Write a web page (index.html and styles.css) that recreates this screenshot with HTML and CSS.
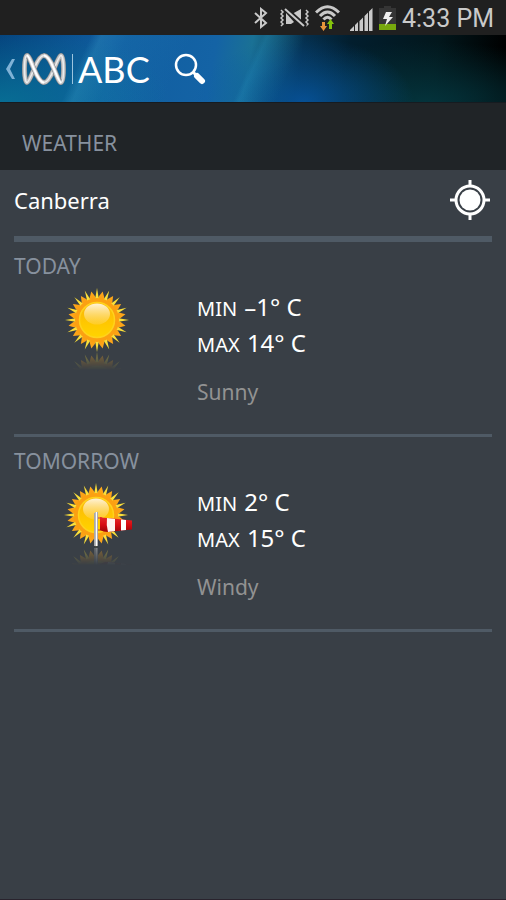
FILE: index.html
```html
<!DOCTYPE html>
<html lang="en">
<head>
<meta charset="utf-8">
<meta name="viewport" content="width=device-width, initial-scale=1">
<title>ABC Weather</title>
<link rel="stylesheet" href="styles.css">
</head>
<body>
<svg class="defs" aria-hidden="true">
  <defs>
    <radialGradient id="rays" cx="0" cy="0" r="30" gradientUnits="userSpaceOnUse"><stop offset=".7" stop-color="#fba012"/><stop offset="1" stop-color="#ffa91e"/></radialGradient>
    <linearGradient id="disc" x1="0" y1="0" x2="0" y2="1"><stop offset="0" stop-color="#f9b40b"/><stop offset=".6" stop-color="#ffc800"/><stop offset="1" stop-color="#ffd400"/></linearGradient>
    <linearGradient id="shine" x1="0" y1="0" x2="0" y2="1"><stop offset="0" stop-color="#fff3d8"/><stop offset="1" stop-color="#ffd24a" stop-opacity=".5"/></linearGradient>
    <linearGradient id="fade" x1="0" y1="14" x2="0" y2="33" gradientUnits="userSpaceOnUse"><stop offset="0" stop-color="#fff" stop-opacity="0"/><stop offset="1" stop-color="#fff" stop-opacity=".4"/></linearGradient>
    <mask id="mirror" maskUnits="userSpaceOnUse" x="-40" y="14" width="80" height="20"><rect x="-40" y="14" width="80" height="20" fill="url(#fade)"/></mask>
    <linearGradient id="pole" x1="0" y1="0" x2="1" y2="0"><stop offset="0" stop-color="#999"/><stop offset=".5" stop-color="#fff"/><stop offset="1" stop-color="#888"/></linearGradient>
    <linearGradient id="sock" x1="0" y1="0" x2="0" y2="1"><stop offset="0" stop-color="#e52a2a"/><stop offset=".5" stop-color="#d80c12"/><stop offset="1" stop-color="#9c0508"/></linearGradient>
    <path id="curve" d="M19.500 0C19.500 7.300 18.600 13.500 17 13.500S13 7.300 10 0S3.500 -13.500 0 -13.500S-7 -7.300 -10 0S-15.600 13.500 -17 13.500S-19.500 7.300 -19.500 0S-18.600 -13.500 -17 -13.500S-13 -7.300 -10 0S-3.500 13.500 0 13.500S7 7.300 10 0S15.600 -13.500 17 -13.500S19.500 -7.300 19.500 0Z"/>
    <path id="over" d="M-17 -13.500C-15.400 -13.500 -13 -7.300 -10 0S-3.500 13.500 0 13.500M0 -13.500C3.500 -13.500 7 -7.300 10 0S15.400 13.500 17 13.500"/>
    <path id="ray" d="M-2 -20L0 -32L2 -20Z"/>
    <g id="ray4"><use href="#ray"/><use href="#ray" transform="rotate(22.5)"/><use href="#ray" transform="rotate(45)"/><use href="#ray" transform="rotate(67.5)"/></g>
    <path id="tooth" d="M-4 -19Q-3 -24 0 -29Q3 -24 4 -19Z"/>
    <g id="tooth4"><use href="#tooth"/><use href="#tooth" transform="rotate(22.5)"/><use href="#tooth" transform="rotate(45)"/><use href="#tooth" transform="rotate(67.5)"/></g>
    <g id="sun">
      <g fill="url(#rays)" transform="rotate(11.25)"><use href="#tooth4"/><use href="#tooth4" transform="rotate(90)"/><use href="#tooth4" transform="rotate(180)"/><use href="#tooth4" transform="rotate(270)"/><circle r="22"/></g>
      <g fill="#fbe03a"><use href="#ray4"/><use href="#ray4" transform="rotate(90)"/><use href="#ray4" transform="rotate(180)"/><use href="#ray4" transform="rotate(270)"/></g>
      <circle r="22" fill="#fba012"/>
      <circle r="17.500" fill="url(#disc)" stroke="#ffd21c" stroke-width="1.500"/>
      <ellipse cy="-6" rx="13" ry="10.500" fill="url(#shine)"/>
    </g>
    <g id="windsock">
      <path d="M0 -2V31" stroke="#a8a8a8" stroke-width="4"/>
      <rect x="-1" y="-3" width="3" height="34" fill="url(#pole)"/>
      <path d="M2 3H6M2 15H6" stroke="#c33" stroke-width="1"/>
      <path d="M4 2Q7 3 12 3L36 5.500V14.500Q20 16 12 17Q7 17 4 15Z" fill="url(#sock)"/>
      <path d="M11 3L19 4V16L12 17Q10 10 11 3Z" fill="#fff3ed"/>
      <path d="M25 4.500L30 5V15L25 15.500Z" fill="#fff"/>
    </g>
  </defs>
</svg>

<div class="status">
  <svg class="bluetooth" width="14" height="22" viewBox="0 0 14 22"><path d="M1 6L12 16L7 20V2L12 6L1 16" fill="none" stroke="#c9c9c9" stroke-width="2"/></svg>
  <svg width="29" height="20" viewBox="0 0 29 20"><path d="M1 2l2 2-2 2 2 2-2 2 2 2-2 2 2 2-2 2M26 2l2 2-2 2 2 2-2 2 2 2-2 2 2 2-2 2" fill="none" stroke="#c9c9c9" stroke-width="1.500"/><path d="M6 5v11h5l3-2ZM12 6l9-5v14Z" fill="#c9c9c9"/><path d="M7 1L26 18" stroke="#202020" stroke-width="3"/><path d="M5 1L24 18" stroke="#c9c9c9" stroke-width="2"/></svg>
  <svg width="25" height="26" viewBox="0 0 25 26"><g fill="none" stroke="#c9c9c9" stroke-width="3"><path d="M1 7.500Q12.500 -4 24 7.500"/><path d="M5 11Q12.500 3 20 11"/><path d="M8.500 14.500Q12.500 10 16.500 14.500"/></g><path d="M7 17h3v4h2l-3.500 5L5 21h2Z" fill="#e8953b"/><path d="M14 24h3v-5h2l-3.500-5-3.500 5h2Z" fill="#86c40c"/></svg>
  <svg class="signal" width="23" height="23" viewBox="0 0 23 23"><path d="M0 23V22L4 18V23ZM5 23V17L8 14V23ZM9.500 23V13L13 9.500V23ZM14.500 23V8L18 4.500V23ZM19 23V3.500L22.500 0V23Z" fill="#c9c9c9"/></svg>
  <svg width="17" height="26" viewBox="0 0 17 26"><path d="M5 1h7v2h5v16H0V3h5Z" fill="#353535"/><path d="M0 19h17v6H0Z" fill="#77a80d"/><path d="M7 7h6l-3 5h4L6 21l2-7H4Z" fill="#eee"/></svg>
  <time class="clock">4:33 PM</time>
</div>

<header class="appbar">
  <a class="brand" href="#" aria-label="Back to ABC home">
    <svg width="10" height="22" viewBox="0 0 10 22"><path d="M6 1h3L4 11l5 10H6L0 11Z" fill="#7fb2d6"/></svg>
    <svg width="46" height="34" viewBox="-23 -17 46 34"><g fill="none"><use href="#curve" stroke="#7b7f83" stroke-width="5"/><use href="#curve" stroke="#bfc1c3" stroke-width="4"/><use href="#curve" stroke="#ededed" stroke-width="1.500"/><use href="#over" stroke="#777b80" stroke-width="5"/><use href="#over" stroke="#cfd0d2" stroke-width="4"/><use href="#over" stroke="#fff" stroke-width="2"/></g></svg>
    <span class="divider"></span>
    <span class="wordmark">ABC</span>
  </a>
  <button class="search" type="button" aria-label="Search">
    <svg width="32" height="32" viewBox="0 0 32 32"><circle cx="12" cy="12" r="10" fill="none" stroke="#fff" stroke-width="2.500"/><path d="M19 19l4 4" stroke="#fff" stroke-width="3"/><path d="M23 23l5 5" stroke="#fff" stroke-width="6" stroke-linecap="round"/></svg>
  </button>
</header>

<h1 class="title">WEATHER</h1>

<main>
  <section class="place">
    <h2 class="city">Canberra</h2>
    <button class="locate" type="button" aria-label="Use my location">
      <svg width="40" height="40" viewBox="0 0 40 40"><circle cx="20" cy="20" r="14" fill="none" stroke="#fff" stroke-width="3"/><circle cx="20" cy="20" r="10.500" fill="#fff"/><path d="M20 0v6M20 34v6M0 20h6M34 20h6" stroke="#fff" stroke-width="3"/></svg>
    </button>
  </section>

  <section class="day">
    <h3 class="when">TODAY</h3>
    <div class="forecast">
      <svg class="picture" width="80" height="88" viewBox="-40 -34 80 88" role="img" aria-label="Sunny"><g transform="matrix(1 0 0 -1 0 64)"><g mask="url(#mirror)"><use href="#sun"/></g></g><use href="#sun"/></svg>
      <div class="facts">
        <p class="temp"><span class="label">MIN</span> –1° C</p>
        <p class="temp"><span class="label">MAX</span> 14° C</p>
        <p class="sky">Sunny</p>
      </div>
    </div>
  </section>

  <section class="day">
    <h3 class="when">TOMORROW</h3>
    <div class="forecast">
      <svg class="picture" width="80" height="88" viewBox="-39 -34 80 88" role="img" aria-label="Sunny with a windsock"><g transform="matrix(1 0 0 -1 0 64)"><g mask="url(#mirror)"><use href="#sun"/><use href="#windsock"/></g></g><use href="#sun"/><use href="#windsock"/></svg>
      <div class="facts">
        <p class="temp"><span class="label">MIN</span> 2° C</p>
        <p class="temp"><span class="label">MAX</span> 15° C</p>
        <p class="sky">Windy</p>
      </div>
    </div>
  </section>
</main>
</body>
</html>
```
FILE: styles.css
```css
* { box-sizing: border-box; }

body {
  margin: 0;
  min-height: 100vh;
  background: #393f46;
  border-bottom: 1px solid #29232d;
  color: #fff;
  font-family: "Noto Sans", "Open Sans", sans-serif;
}

h1, h2, h3, p { margin: 0; font-weight: 400; }
svg { display: block; flex: none; }
.defs { position: absolute; width: 0; height: 0; }

button {
  padding: 0;
  border: 0;
  background: none;
  color: inherit;
}

.status {
  display: flex;
  align-items: center;
  justify-content: flex-end;
  gap: 6px;
  height: 35px;
  padding: 0 12px 0 0;
  background: #202020;
}
.bluetooth { margin-right: 6px; }
.signal { margin: 4px 0 0 4px; }
.clock {
  color: #c9c9c9;
  font: 25px/36px Roboto, sans-serif;
  padding-top: 2px;
}

.appbar {
  display: flex;
  align-items: center;
  gap: 24px;
  height: 68px;
  padding: 0 6px;
  border-bottom: 1px solid #161b20;
  background:
    linear-gradient(114deg, transparent 17%, #3fa7d044 19%, #2c94c522 24%, transparent 36%),
    linear-gradient(114deg, transparent 49%, #2b9fc833 50%, transparent 57%),
    radial-gradient(110px 65px at 60% 100%, #0758a8cc, transparent),
    radial-gradient(190px 60px at 84% 100%, #04333b, transparent),
    radial-gradient(170px 80px at 0 100%, #087899cc, transparent),
    linear-gradient(100deg, #053d7b 0, #105da0 22%, #1463a5 42%, #1a7195 49%, #052f4c 59%, #021e2e 68%, #02171c 85%, #000 98%);
}
.brand {
  display: flex;
  align-items: center;
  gap: 5px;
  color: #fff;
  text-decoration: none;
}
.divider { width: 1px; height: 30px; background: #9cc5df; }
.wordmark { font: 36px/40px Lato, sans-serif; }

.title {
  padding: 26px 22px 12px;
  background: #202427;
  color: #87919e;
  font-size: 21px;
  line-height: 29px;
}

main { padding: 0 14px; }
.place {
  display: flex;
  align-items: center;
  justify-content: space-between;
  height: 72px;
  padding: 0 2px 6px 0;
  border-bottom: 6px solid #4f5a65;
}
.city { font-size: 22px; line-height: 32px; }

.day {
  padding: 10px 0 26px;
  border-bottom: 3px solid #4f5a65;
}
.when { color: #87919e; font-size: 21px; line-height: 29px; }
.forecast { display: flex; gap: 60px; padding-left: 43px; }
.picture { margin-top: 5px; }
.facts { padding-top: 8px; }
.temp { font-size: 24px; line-height: 36px; }
.label { margin-right: 1px; font-size: 20px; line-height: 20px; }
.sky {
  margin-top: 15px;
  color: #929292;
  font-size: 21px;
  line-height: 32px;
}
```
